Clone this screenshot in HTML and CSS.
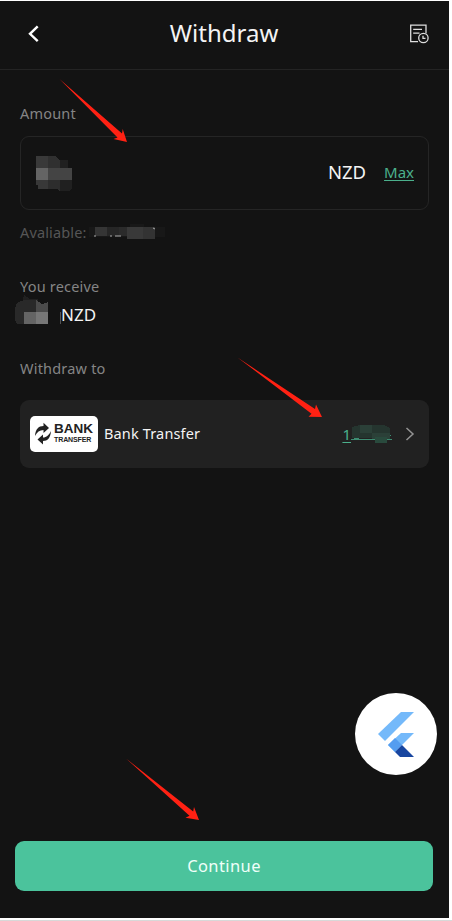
FILE: index.html
```html
<!DOCTYPE html>
<html lang="en">
<head>
<meta charset="utf-8">
<title>Withdraw</title>
<link rel="stylesheet" href="styles.css">
</head>
<body>
<div class="app">
  <header class="header">
    <svg class="back" width="14" height="20" viewBox="0 0 14 20"><path d="M10.7 2.3 3 9.8l7.7 7.4" fill="none" stroke="#fff" stroke-width="2.4"/></svg>
    <h1 class="title"><span>Withdraw</span></h1>
    <svg class="history" width="20" height="20" viewBox="0 0 20 20" fill="none" stroke="#dedede" stroke-width="1.3"><path d="M9 17.6H1.7V1.1H17v8.5"/><path d="M4.2 5.4H13M4.2 9.1H10.5"/><circle cx="14.4" cy="14" r="4.7"/><path d="M14 11.7v2.7h2.5"/></svg>
  </header>
  <main class="main">
    <div class="label">Amount</div>
    <div class="amount-box">
      <svg class="amount-mask" width="37" height="37" viewBox="0 0 37 37" shape-rendering="crispEdges"><path fill="#393939" d="M0 1h12v12H0z"/><path fill="#303030" d="M12 1h7l5 4v8H12z"/><path fill="#202020" d="M24 5h8v8h-8z"/><path fill="#646464" d="M0 13h12v12H0z"/><path fill="#444" d="M12 13h24v12H12z"/><path fill="#383838" d="M0 25h12v9H2v-4H0z"/><path fill="#2d2d2d" d="M12 25h12v11l-3-2h-9z"/><path fill="#202020" d="M24 25h12v9l-3 2h-9z"/></svg>
      <span class="currency">NZD</span>
      <a class="max">Max</a>
    </div>
    <div class="available"><span>Avaliable:</span>
      <svg width="78" height="18" viewBox="0 0 78 18"><path fill="#181818" d="M0 4h41V1h14v3h21v10H0z"/><path fill="#353535" d="M6 4h12v9H6z"/><path fill="#262626" d="M18 4h12v9H18z"/><path fill="#2b2b2b" d="M30 4h8v9h-8z"/><path fill="#393939" d="M38 4h16v12H38z"/><path fill="#333" d="M54 4h12v12H54z"/><path stroke="#aaa" d="M5 13h2m14 0h2m3 0h6m32-8 2 1"/></svg>
    </div>
    <div class="label receive-label">You receive</div>
    <div class="receive">
      <svg width="46" height="31" viewBox="0 0 46 31" shape-rendering="crispEdges"><path fill="#202020" d="M9 0l6 4h8v4H7z"/><path fill="#292929" d="M2 8l7-3h12v12H9v12H2l-2-4V13z"/><path fill="#4b4b4b" d="M21 5l6 4 6-2v10H21z"/><path fill="#646464" d="M9 17h12v12H9z"/><path fill="#777" d="M21 17h12v12H21z"/><path fill="#535353" d="M45 17h1v12h-1z"/></svg>
      <span class="receive-currency">NZD</span>
    </div>
    <div class="label to-label">Withdraw to</div>
    <div class="method">
      <div class="bank-logo">
        <svg width="18" height="24" viewBox="0 0 17 24" fill="#222"><path d="M.5 14C1 7 4 4 9 4V.8L14.5 6 9 11V8C5 8 2.5 10 .5 14z"/><path d="M16.5 9C16 16 13 19 8.5 19v3.5L3 17.6l5.5-5V15.5C12 15.5 14.5 13 16.5 9z"/></svg>
        <div class="bank-words"><b class="bank">BANK</b><b class="transfer">TRANSFER</b></div>
      </div>
      <span class="method-name">Bank Transfer</span>
      <div class="account"><span>1</span><svg width="41" height="20" viewBox="0 0 41 20" shape-rendering="crispEdges"><path fill="#25352f" d="M1 3l8-2h24l6 3v10H1z"/><path fill="#2b4038" d="M9 1h12v8H9zM21 9h18v6H21z"/><path fill="#294a3d" d="M24 13h12v6H24z"/><path stroke="#3d8d72" d="M0 15.5h24m12 0h5M3 14.5h5m31-4v1"/></svg></div>
      <svg class="chevron" width="10" height="16" viewBox="0 0 10 16"><path d="m1.5 2 6.5 6-6.5 6" fill="none" stroke="#939393" stroke-width="1.5"/></svg>
    </div>
  </main>
  <footer class="footer"><button class="continue">Continue</button></footer>
  <div class="fab"><svg width="38" height="47" viewBox="0 0 38 47"><path fill="#74b9fa" d="M24 1h13L8 30l-7-7z"/><path fill="#74b9fa" d="M24 22h13L18 41 11 34z"/><path fill="#559df0" d="m18 27 7 7-7 7-7-7z"/><path fill="#1846a0" d="m18 41 7-7 12 12H23z"/></svg></div>
  <svg class="arrows" width="449" height="917" viewBox="0 1 449 917" fill="#ff2113"><path d="M59.5 79 122 133.500l.7-4.500L127 142l-13.500-3 4-1.500z"/><path d="M237.500 357.500 315 409l1-4.500 6 12.500-13.500-.2 3-3z"/><path d="M126 758.500 193.200 811.500l.8-4.500 5 13-13.500-2.200 4-2z"/></svg>
</div>
</body>
</html>
```
FILE: styles.css
```css
* { box-sizing: border-box; }
body { margin: 0; height: 921px; padding-top: 1px; background: #fff; border-bottom: 1px solid #d8d8d8; overflow: hidden; font-family: "Noto Sans", sans-serif; }
svg { display: block; flex: none; }
.app { position: relative; display: flex; flex-direction: column; width: 449px; height: 917px; background: #131313; color: #f4f4f4; }
.header { display: flex; align-items: center; height: 69px; padding: 0 20px 3px 27px; border-bottom: 1px solid #242424; }
.title { flex: 1; margin: 0; padding: 0 2px 1px 0; font-size: 24px; font-weight: 400; line-height: 32px; text-align: center; }
.main { flex: 1; padding: 32px 20px 0; }
.label { height: 22px; font-size: 14.5px; line-height: 22px; color: #858585; letter-spacing: .2px; }
.amount-box { display: flex; align-items: center; width: 409px; height: 74px; margin-top: 12px; padding: 0 14px 3px 15px; border: 1px solid #252525; border-radius: 9px; }
.amount-mask { margin-top: 3px; }
.currency { margin: -1px 0 0 auto; font-size: 18.5px; }
.max { margin-left: 18px; font-size: 15px; color: #4bb08c; text-decoration: underline; text-underline-offset: 2px; text-decoration-thickness: 1px; }
.available { display: flex; align-items: center; gap: 2px; height: 22px; margin-top: 11px; font-size: 14.5px; color: #565656; letter-spacing: .15px; }
.receive-label { margin-top: 32px; }
.receive { display: flex; align-items: center; height: 31px; margin: -2px 0 0 -5px; font-size: 17px; }
.receive-currency { padding-top: 7px; letter-spacing: .1px; }
.to-label { margin-top: 31px; }
.method { display: flex; align-items: center; width: 409px; height: 68px; margin-top: 21px; padding: 0 14px 0 10px; border-radius: 9px; background: #212121; }
.bank-logo { display: flex; align-items: center; gap: 2px; width: 68px; height: 36px; padding-left: 4px; border-radius: 5px; background: #fff; color: #222; }
.bank-words { display: flex; flex-direction: column; font-family: "Liberation Sans", sans-serif; }
.bank { font-size: 13.5px; line-height: 15px; letter-spacing: 0; margin-top: -3px; }
.transfer { font-size: 7px; line-height: 8px; letter-spacing: -.1px; }
.method-name { margin: -2px 0 0 6px; font-size: 14.5px; letter-spacing: .15px; }
.account { display: flex; align-items: center; height: 20px; margin: -1px 0 0 auto; font-size: 15px; color: #4bb08c; text-decoration: underline; text-underline-offset: 2px; text-decoration-thickness: 1px; }
.chevron { margin-left: 13px; }
.footer { height: 77px; padding-left: 15px; }
.continue { display: block; width: 418px; height: 50px; padding: 0 0 2px; border: 0; border-radius: 9px; background: #4bc39c; color: #effff9; font-family: inherit; font-size: 16.5px; letter-spacing: .4px; }
.fab { position: absolute; left: 355px; top: 692px; display: flex; align-items: center; justify-content: center; width: 82px; height: 82px; border-radius: 50%; background: #fff; }
.arrows { position: absolute; left: 0; top: 0; pointer-events: none; }
```
